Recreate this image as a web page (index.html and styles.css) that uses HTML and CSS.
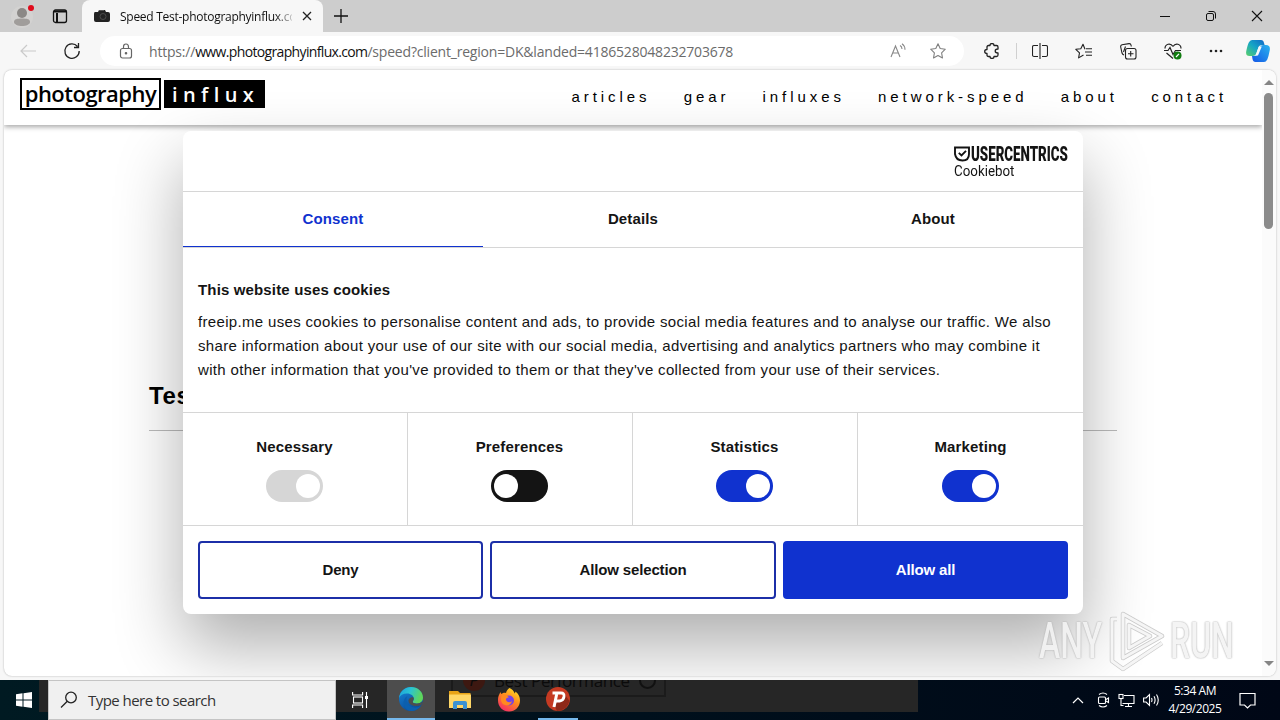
FILE: index.html
```html
<!DOCTYPE html>
<html lang="en">
<head>
    <meta charset="UTF-8">
    <meta name="viewport" content="width=device-width, initial-scale=1.0">
    <title>Speed Test-photographyinflux.com</title>
    <link rel="stylesheet" href="styles.css">
</head>
<body>
<div class="desktop">

    <!-- Tab strip -->
    <div class="tabstrip">
        <svg class="profile" width="24" height="32" viewBox="0 0 24 32">
            <circle cx="12" cy="17" r="11" fill="#d3d2d1"/>
            <circle cx="12" cy="13" r="5" fill="#8b8886"/>
            <path d="M4 22c0-3 3-3.500 8-3.500s8 .5 8 3.500c0 2.500-4 4-8 4s-8-1.500-8-4z" fill="#a09d9b"/>
            <circle cx="21" cy="8" r="3" fill="#e00b1c"/>
        </svg>
        <svg class="tab-actions" width="16" height="16" viewBox="0 0 16 16" fill="none" stroke="#111" stroke-width="1.300">
            <rect x="1.500" y="2" width="13" height="12.500" rx="2"/>
            <path d="M2 3.500h12M5 5v9" stroke-width="2"/>
        </svg>
        <div class="tab">
            <svg width="16" height="14" viewBox="0 0 16 14">
                <path d="M1 3h3l1-2h6l1 2h2q2 0 2 2v6q0 2-2 2H2q-2 0-2-2V5q0-2 1-2z" fill="#222"/>
                <circle cx="9" cy="7.500" r="3" fill="none" stroke="#4a4a4a"/>
                <path d="M5 1.500h5" stroke="#555"/>
            </svg>
            <span class="tab-title">Speed Test-photographyinflux.com</span>
            <svg width="10" height="10" viewBox="0 0 10 10" stroke="#222" stroke-width="1.300"><path d="M1 1l8 8M9 1L1 9"/></svg>
        </div>
        <svg class="new-tab" width="14" height="14" viewBox="0 0 14 14" stroke="#111" stroke-width="1.300"><path d="M7 0v14M0 7h14"/></svg>
        <div class="window-buttons">
            <svg width="12" height="12" viewBox="0 0 12 12" stroke="#111"><path d="M1 6.500h10"/></svg>
            <svg width="12" height="12" viewBox="0 0 12 12" fill="none" stroke="#111"><rect x="1.500" y="3.500" width="7" height="7" rx="1.500"/><path d="M3.500 1.500h4.500q2.500 0 2.500 2.500v4.500"/></svg>
            <svg width="12" height="12" viewBox="0 0 12 12" stroke="#111" stroke-width="1.100"><path d="M1 1l10 10M11 1L1 11"/></svg>
        </div>
    </div>

    <!-- Toolbar -->
    <div class="toolbar">
        <svg class="back" width="16" height="14" viewBox="0 0 16 14" fill="none" stroke="#cacaca" stroke-width="1.200"><path d="M16 7H1M7 1L1 7l6 6"/></svg>
        <svg class="reload" width="18" height="18" viewBox="0 0 18 18" fill="none" stroke="#222" stroke-width="1.300"><path d="M14.500 4.500A7.200 7.200 0 1 0 16.200 9M15.500 1v4.500H11"/></svg>
        <div class="address">
            <svg class="lock" width="14" height="16" viewBox="0 0 14 16" fill="none" stroke="#666" stroke-width="1.200"><rect x="1.500" y="5.500" width="11" height="9.500" rx="2"/><path d="M4.500 5.500V4q0-3 2.500-3t2.500 3v1.500"/><circle cx="7" cy="10.200" r=".7" fill="#555"/></svg>
            <span class="url">https://<b>www.photographyinflux.com</b>/speed?client_region=DK&amp;landed=4186528048232703678</span>
            <svg class="read" width="17" height="16" viewBox="0 0 17 16" fill="none" stroke="#888" stroke-width="1.100"><path d="M1 14L5.500 3 10 14M2.700 10h5.700M10 2.500q2 1 2 3.500M12 .8q3 2 3 6"/></svg>
            <svg class="fav" width="16" height="16" viewBox="0 0 16 16" fill="none" stroke="#808080" stroke-width="1.100" stroke-linejoin="round"><path d="M8 .8l2.200 4.700 5.100.7-3.700 3.600.9 5.200L8 12.500 3.500 15l.9-5.200L.7 6.200l5.100-.7z"/></svg>
        </div>
        <div class="tools">
            <svg width="16" height="16" viewBox="0 0 16 16" fill="none" stroke="#222" stroke-width="1.300" stroke-linejoin="round"><path d="M4.500 2.500H6q0-2 2-2t2 2h2.500q1.500 0 1.500 1.500v2q-2.800 0-2.800 2T14 10v2q0 1.500-1.500 1.500H10q0 2-2 2t-2-2H4.500Q3 13.500 3 12v-1.500Q.7 10.500.7 8.500T3 6.500V4q0-1.500 1.500-1.500z"/></svg>
            <i class="divider"></i>
            <svg width="16" height="16" viewBox="0 0 16 16" fill="none" stroke="#222" stroke-width="1.100"><path d="M6 2.500H2q-1.500 0-1.500 1.500v8q0 1.500 1.500 1.500h4M10 2.500h4q1.500 0 1.500 1.500v8q0 1.500-1.500 1.500h-4M8 0v16"/></svg>
            <svg width="18" height="16" viewBox="0 0 18 16" fill="none" stroke="#222" stroke-width="1.100" stroke-linejoin="round"><path d="M10 6.200L8 1.200 5.800 5.700.8 6.300l3.700 3.600-.9 5L8.500 12M11 5.700h6M10 9h7M11 12.300h6"/></svg>
            <svg width="17" height="17" viewBox="0 0 17 17" fill="none" stroke="#222" stroke-width="1.100"><rect x="5.500" y="5.500" width="10.500" height="10.500" rx="2"/><path d="M10.700 8v5.500M8 10.700h5.500M4 12q-1.500-.5-2-2L.7 4Q.4 2.200 2 1.800l7-1.200q1.700-.2 2 1.400l.3 1.500M5.500 3.500L3.500 9"/></svg>
            <svg width="18" height="17" viewBox="0 0 18 17" fill="none" stroke="#222" stroke-width="1.200"><path d="M9 3.500C6.500-.5 1 .8 1 5.500M9 3.500c2.500-4 8-2.700 8 2M0 7.500h4l2-3 3 7 2.500-4H17M2.500 10L9 15.500"/><circle cx="13.500" cy="12.500" r="4" fill="#107c10" stroke="none"/><path d="M12 14l3-3.200" stroke="#fff"/></svg>
            <svg width="14" height="4" viewBox="0 0 14 4" fill="#222"><circle cx="2" cy="2" r="1.300"/><circle cx="7" cy="2" r="1.300"/><circle cx="12" cy="2" r="1.300"/></svg>
        </div>
        <svg class="copilot" width="24" height="22" viewBox="0 0 24 22">
            <defs>
                <linearGradient id="cpa" x1="0" y1="1" x2="1" y2="0"><stop offset="0" stop-color="#5ad06a"/><stop offset=".5" stop-color="#16a6c5"/><stop offset="1" stop-color="#1166c8"/></linearGradient>
                <linearGradient id="cpb" x1="0" y1="1" x2="1" y2="0"><stop offset="0" stop-color="#1457e6"/><stop offset="1" stop-color="#2ab3ee"/></linearGradient>
            </defs>
            <path d="M6 0h9q2.500 0 3 3l.6 2h-3q-2.500 0-3.200 2.500L10.500 13q-.9 3-4 3H3.500Q-.5 16 .2 11.500 1.500 5 2.800 2.500 4 0 6 0z" fill="url(#cpa)"/>
            <path d="M18 22H9.500q-2.500 0-3-3L6 16h2.500q2.500 0 3.300-2.500L13.500 8q.9-3 4-3H20q4.500 0 3.800 5-1.200 6.500-2.500 9.500Q20 22 18 22z" fill="url(#cpb)"/>
            <path d="M12.800 6.500h3L12 15.500H9.500z" fill="#f4f8fb"/>
        </svg>
    </div>

    <!-- Web page -->
    <div class="viewport">
        <div class="page">
            <header class="site-header">
                <div class="logo"><span class="logo-photo">photography</span><span class="logo-influx">influx</span></div>
                <nav class="menu">
                    <a>articles</a><a>gear</a><a>influxes</a><a>network-speed</a><a>about</a><a>contact</a>
                </nav>
            </header>
            <h2 class="page-title">Test your network speed</h2>

            <!-- Cookie dialog -->
            <div class="dialog">
                <div class="dialog-head">
                    <div class="brand">
                        <div class="brand-top">
                            <svg width="16" height="16" viewBox="0 0 16 16" fill="none" stroke="#141414" stroke-width="1.900"><path d="M1 1.500h14V8q0 6.500-6.500 6.500T1 8zM4.800 6.800L7.500 9.500 12 4.800"/></svg>
                            <span>USERCENTRICS</span>
                        </div>
                        <span class="brand-sub">Cookiebot</span>
                    </div>
                </div>
                <div class="dialog-tabs">
                    <div class="active">Consent</div>
                    <div>Details</div>
                    <div>About</div>
                </div>
                <div class="dialog-body">
                    <h3>This website uses cookies</h3>
                    <p>freeip.me uses cookies to personalise content and ads, to provide social media features and to analyse our traffic. We also<br>
                    share information about your use of our site with our social media, advertising and analytics partners who may combine it<br>
                    with other information that you've provided to them or that they've collected from your use of their services.</p>
                </div>
                <div class="options">
                    <div><span>Necessary</span><i class="switch disabled"></i></div>
                    <div><span>Preferences</span><i class="switch off"></i></div>
                    <div><span>Statistics</span><i class="switch"></i></div>
                    <div><span>Marketing</span><i class="switch"></i></div>
                </div>
                <div class="buttons">
                    <button>Deny</button>
                    <button>Allow selection</button>
                    <button class="primary">Allow all</button>
                </div>
            </div>
        </div>
        <div class="scrollbar">
            <i class="arrow up"></i>
            <i class="thumb"></i>
            <i class="arrow down"></i>
        </div>
    </div>

    <!-- Watermark -->
    <div class="watermark">
        <span>ANY</span>
        <svg width="58" height="62" viewBox="0 0 58 62" fill="none" stroke-linejoin="round">
            <path d="M15 4v44l39-22zM21 15v23l21-12zM9 9H4v42l11 8 39-26" stroke="#c4c4c4" stroke-width="4.500"/>
            <path d="M15 4v44l39-22zM21 15v23l21-12zM9 9H4v42l11 8 39-26" stroke="#f5f5f5" stroke-width="3"/>
        </svg>
        <span>RUN</span>
    </div>

    <!-- Taskbar -->
    <div class="taskbar">
        <div class="backdrop"><div class="ghost"><i>P</i>Best Performance<b></b></div></div>
        <svg class="start" width="16" height="16" viewBox="0 0 16 16" fill="#fff"><path d="M0 2.200l6.500-.9v6.200H0zM7.500 1.200L16 0v7.500H7.500zM0 8.500h6.500v6.200L0 13.800zM7.500 8.500H16V16l-8.500-1.200z"/></svg>
        <div class="search">
            <svg width="18" height="18" viewBox="0 0 18 18" fill="none" stroke="#222" stroke-width="1.300"><circle cx="11" cy="6.500" r="5.300"/><path d="M7.300 10.300L1 16.500"/></svg>
            <span>Type here to search</span>
        </div>
        <div class="task">
            <svg width="17" height="16" viewBox="0 0 17 16" fill="none" stroke="#fff" stroke-width="1.100"><path d="M.6 0v3h10V0M.6 16v-3h10v3M14.500 0v16"/><rect x="1.500" y="5" width="9" height="6"/><path d="M13 5.500h3" stroke-width="3"/></svg>
        </div>
        <div class="task open">
            <svg width="24" height="24" viewBox="0 0 24 24">
                <defs>
                    <linearGradient id="ea" x1="0" y1="0" x2="1" y2=".3"><stop offset="0" stop-color="#1aa0df"/><stop offset=".5" stop-color="#2bc4d2"/><stop offset="1" stop-color="#5fd65a"/></linearGradient>
                    <linearGradient id="eb" x1="0" y1="0" x2=".5" y2="1"><stop offset="0" stop-color="#1687d9"/><stop offset="1" stop-color="#0b4d9c"/></linearGradient>
                </defs>
                <circle cx="12" cy="12" r="12" fill="url(#eb)"/>
                <path d="M0 11C1 4 6 0 12 0c7 0 12 5 12 10.500 0 4-3 6-6.500 6-3 0-4-1-3.700-2 .5-1 1-1.500 1-3C14.800 9 12 6.500 8 6.500 4 6.500 1 8.500 0 11z" fill="url(#ea)"/>
                <path d="M8.500 9C6 12 8 20 16 20.500q3.500.2 6-2c-2 3.500-6 5.500-10 5.500-5 0-9-6-7-11q1-3 3.500-4z" fill="#0c5fae"/>
                <path d="M14.800 11.500c0 2-1.500 2.500-1 3.700.6 1.500 5.200 2.300 8.700 0L24 15l-2 3c-5 2.500-12 .5-12.500-4-.2-3 5-5 5.300-2.500z" fill="#4d4d4d"/>
            </svg>
        </div>
        <div class="task">
            <svg width="22" height="20" viewBox="0 0 22 20"><path d="M0 1h9l2 2h10.500v15H0z" fill="#e8a317"/><path d="M0 4.500h22V18H0z" fill="#ffd767"/><path d="M4 19v-6q0-2 2-2h10q2 0 2 2v6h-4v-4H8v4z" fill="#3b92d2"/></svg>
        </div>
        <div class="task">
            <svg width="24" height="24" viewBox="0 0 24 24">
                <defs><linearGradient id="ff" x1=".8" y1="0" x2=".2" y2="1"><stop offset="0" stop-color="#ffe226"/><stop offset=".45" stop-color="#ff8a1d"/><stop offset="1" stop-color="#f5256d"/></linearGradient></defs>
                <path d="M12.500 0c4 2 5 4.500 5 5.500.8-.3 1-1.200.8-2C22 6 23 9.500 23 12.500 23 19 18 23.500 12 23.500S1 19 1 12.500C1 8 2.500 6 3.500 4c.2 1 .5 1.700 1 2C6 4.500 8 4.500 9 5c.5-2 1.500-4 3.500-5z" fill="url(#ff)"/>
                <circle cx="12" cy="12.500" r="5" fill="#7542e5"/>
                <path d="M5 7q5-1 7 2.500c-3 0-3 1.500-3 2.500 1 2.500 4 3 6 1-1 4-4 5-7 4-4-1-5-6-3-10z" fill="#ff8a20"/>
            </svg>
        </div>
        <div class="task running">
            <svg width="24" height="24" viewBox="0 0 24 24"><circle cx="12" cy="12" r="12" fill="#c53a22"/><path d="M9 20l2 3.900Q21 24 23.500 14L18.500 7l-4 7.500H11z" fill="#8e2818"/><path d="M6.500 6H15q3.500 0 3 3.700T13.500 14H10" fill="none" stroke="#fff" stroke-width="2.800"/><path d="M10.700 7L8 20" fill="none" stroke="#fff" stroke-width="3"/></svg>
        </div>
        <div class="tray">
            <svg width="12" height="8" viewBox="0 0 12 8" fill="none" stroke="#fff" stroke-width="1.200"><path d="M1 7l5-5 5 5"/></svg>
            <svg width="13" height="16" viewBox="0 0 13 16" fill="none" stroke="#fff" stroke-width="1.100"><rect x="1.500" y="5" width="7" height="6.500" rx="1"/><path d="M9 7.500l2.500-1.500v4.500L9 9M2 2.500Q6 -.5 10 2.500M2 13.500q4 3 8 0"/></svg>
            <svg width="17" height="15" viewBox="0 0 17 15" fill="none" stroke="#fff" stroke-width="1.100"><path d="M6 2.500h10v8H4.500M10.500 10.500V13.500M7 13.500h7M3 5.500v7h2.500"/><rect x="1" y="1.500" width="4" height="4"/></svg>
            <svg width="17" height="14" viewBox="0 0 17 14" fill="none" stroke="#fff" stroke-width="1.100"><path d="M.6 5h2.500L6.500 1.500v11L3.100 9H.6zM8.500 5q1 2 0 4M11 3.300q2.200 3.700 0 7.400M13.500 1.500q3.500 5.500 0 11"/></svg>
            <div class="clock"><span>5:34 AM</span><span>4/29/2025</span></div>
            <svg width="17" height="17" viewBox="0 0 17 17" fill="none" stroke="#fff" stroke-width="1.200"><path d="M1 1.500h15v11.500h-4.500L8.500 16l-3-3H1z"/></svg>
        </div>
    </div>
</div>
</body>
</html>
```
FILE: styles.css
```css
* {
    box-sizing: border-box;
}
body {
    margin: 0;
    font-family: "Liberation Sans", Arial, sans-serif;
}
svg {
    display: block;
    flex: none;
}
.desktop {
    position: relative;
    width: 1280px;
    height: 720px;
    overflow: hidden;
    background: #f7f7f7;
    display: flex;
    flex-direction: column;
}

/* tab strip */
.tabstrip {
    height: 32px;
    flex: none;
    display: flex;
    align-items: center;
    background: #cdcdcd;
}
.profile {
    margin-left: 10px;
}
.tab-actions {
    margin-left: 18px;
}
.tab {
    width: 241px;
    height: 32px;
    margin-left: 14px;
    padding: 0 11px 0 12px;
    display: flex;
    align-items: center;
    background: #f7f7f7;
    border-radius: 8px 8px 0 0;
}
.tab-title {
    width: 174px;
    margin: 0 10px 0 10px;
    overflow: hidden;
    white-space: nowrap;
    font-family: "Open Sans", sans-serif;
    font-size: 12px;
    letter-spacing: -0.27px;
    color: #111;
    -webkit-mask-image: linear-gradient(90deg, #000 155px, transparent 176px);
    mask-image: linear-gradient(90deg, #000 155px, transparent 176px);
}
.new-tab {
    margin-left: 11px;
}
.window-buttons {
    margin-left: auto;
    margin-right: 17px;
    display: flex;
    gap: 34px;
}

/* toolbar */
.toolbar {
    height: 38px;
    flex: none;
    display: flex;
    align-items: center;
}
.back {
    margin-left: 20px;
}
.reload {
    margin-left: 27px;
}
.address {
    width: 864px;
    height: 30px;
    margin-left: 19px;
    padding: 0 18px 0 19px;
    display: flex;
    align-items: center;
    background: #fff;
    border-radius: 15px;
}
.url {
    margin-left: 16px;
    font-family: "Open Sans", sans-serif;
    font-size: 14px;
    letter-spacing: -0.2px;
    white-space: nowrap;
    color: #6b6b6b;
}
.url b {
    font-weight: normal;
    letter-spacing: -0.65px;
    color: #111;
}
.read {
    margin-left: auto;
}
.fav {
    margin-left: 23px;
}
.tools {
    margin-left: 20px;
    display: flex;
    align-items: center;
    gap: 27px;
}
.divider {
    width: 1px;
    height: 16px;
    margin: 0 -12px 0 -11px;
    background: #d0d0d0;
}
.copilot {
    margin-left: 23px;
}

/* page */
.viewport {
    width: 1272px;
    height: 606px;
    margin-left: 4px;
    flex: none;
    display: flex;
    overflow: hidden;
    background: #fff;
    border-radius: 8px;
    box-shadow: 0 0 2px rgba(0, 0, 0, 0.3);
}
.page {
    position: relative;
    width: 1258px;
    overflow: hidden;
}
.site-header {
    height: 55px;
    padding: 0 32px 0 16px;
    display: flex;
    align-items: center;
    justify-content: space-between;
    background: #fff;
    box-shadow: 0 2px 5px rgba(0, 0, 0, 0.35);
}
.logo {
    display: flex;
    align-items: center;
    margin-top: -7px;
    font-family: "Open Sans", sans-serif;
}
.logo-photo {
    width: 141px;
    height: 32px;
    border: 2px solid #000;
    font-size: 22px;
    font-weight: 600;
    line-height: 26px;
    text-align: center;
    letter-spacing: -0.5px;
}
.logo-influx {
    width: 101px;
    height: 28px;
    margin-left: 3px;
    padding-left: 8px;
    background: #000;
    color: #fff;
    font-size: 20px;
    font-weight: 600;
    line-height: 29px;
    letter-spacing: 5.4px;
}
.menu {
    display: flex;
    gap: 33.2px;
    margin: -2px 3px 0 0;
    font-size: 15px;
    letter-spacing: 3.93px;
    color: #000;
}
.page-title {
    width: 968px;
    height: 49px;
    margin: 257px 0 0 145px;
    font-size: 24px;
    line-height: 28px;
    letter-spacing: 0.6px;
    border-bottom: 1px solid #bbb;
}

/* cookie dialog */
.dialog {
    position: absolute;
    left: 179px;
    top: 61px;
    width: 900px;
    height: 483px;
    background: #fff;
    border-radius: 8px;
    box-shadow: 0 32px 68px rgba(0, 0, 0, 0.32);
    color: #141414;
    font-size: 15px;
    letter-spacing: 0.15px;
}
.dialog-head {
    height: 61px;
    padding: 14px 15px 0;
    display: flex;
    justify-content: flex-end;
    border-bottom: 1px solid #d6d6d6;
}
.brand {
    width: 114px;
    letter-spacing: 0;
}
.brand-top {
    display: flex;
    align-items: center;
    gap: 1px;
    height: 18px;
}
.brand-top span {
    font-family: Roboto, sans-serif;
    font-size: 20.5px;
    line-height: 16px;
    font-weight: 900;
    transform: scaleX(0.65);
    transform-origin: left;
}
.brand-sub {
    display: block;
    font-family: Roboto, sans-serif;
    font-size: 15px;
    line-height: 16px;
    transform: scaleX(0.89);
    transform-origin: left;
}
.dialog-tabs {
    height: 56px;
    display: flex;
    border-bottom: 1px solid #d6d6d6;
    font-weight: bold;
    text-align: center;
    line-height: 54px;
}
.dialog-tabs div {
    flex: 1;
}
.dialog-tabs .active {
    color: #1032cf;
    border-bottom: 1px solid #1032cf;
}
.dialog-body {
    height: 164px;
    padding: 33px 15px 0;
}
.dialog-body h3 {
    margin: 0 0 11px;
    font-size: 15px;
    line-height: 18px;
}
.dialog-body p {
    margin: 0;
    line-height: 24px;
    letter-spacing: 0.33px;
    white-space: nowrap;
}
.options {
    height: 114px;
    display: flex;
    border-top: 1px solid #d6d6d6;
    border-bottom: 1px solid #d6d6d6;
    font-weight: bold;
}
.options div {
    width: 225px;
    padding: 25px 1px 0 0;
    display: flex;
    flex-direction: column;
    align-items: center;
    line-height: 17px;
    border-right: 1px solid #d6d6d6;
}
.options div:last-child {
    padding-right: 0;
    border-right: 0;
}
.switch {
    width: 57px;
    height: 32px;
    margin-top: 15px;
    padding: 4px 3px;
    display: flex;
    justify-content: flex-end;
    background: #1032cf;
    border-radius: 16px;
}
.switch::after {
    content: "";
    width: 24px;
    height: 24px;
    background: #fff;
    border-radius: 50%;
}
.switch.off {
    background: #141414;
    justify-content: flex-start;
}
.switch.disabled {
    background: #d6d6d6;
}
.buttons {
    padding: 15px;
    display: flex;
    gap: 7.4px;
}
.buttons button {
    flex: 1;
    height: 58px;
    padding: 0 0 2px;
    background: #fff;
    border: 2px solid #1c2fa8;
    border-radius: 4px;
    color: #141414;
    font: bold 15px "Liberation Sans", Arial, sans-serif;
    letter-spacing: -0.15px;
}
.buttons .primary {
    background: #1032cf;
    border-color: #1032cf;
    color: #fff;
}

/* scrollbar */
.scrollbar {
    width: 14px;
    padding: 10px 1px 10px 0;
    display: flex;
    flex-direction: column;
    align-items: center;
    background: #fbfbfb;
}
.thumb {
    width: 9px;
    height: 136px;
    margin-top: 8px;
    background: #8b8b8b;
    border-radius: 5px;
}
.arrow {
    border: 5px solid transparent;
}
.arrow.up {
    border-top: 0;
    border-bottom-color: #858585;
}
.arrow.down {
    margin-top: auto;
    border-bottom: 0;
    border-top-color: #858585;
}

/* watermark lies over the page */
.watermark {
    position: absolute;
    left: 1039px;
    top: 609px;
    width: 196px;
    height: 64px;
    display: flex;
    align-items: center;
    opacity: 0.9;
}
.watermark span {
    width: 64px;
    font-family: Roboto, sans-serif;
    font-size: 50px;
    font-weight: 500;
    color: #f3f3f3;
    text-shadow: 0 0 2px #aaa, 0 0 2px #bbb;
    transform: scaleX(0.64);
    transform-origin: left;
}
.watermark svg {
    margin: 0 4px 0 5px;
}

/* taskbar */
.taskbar {
    position: relative;
    height: 40px;
    margin-top: 4px;
    flex: none;
    display: flex;
    align-items: center;
    background: linear-gradient(90deg, #001a22, #00101c 50%, #000716);
}
.backdrop {
    position: absolute;
    left: 39px;
    top: 0;
    width: 879px;
    height: 32px;
    overflow: hidden;
    background: #262626;
}
.ghost {
    width: 215px;
    height: 30px;
    margin: -13px 0 0 412px;
    padding: 0 0 4px 10px;
    display: flex;
    align-items: center;
    gap: 9px;
    border: 2px solid #1b1b1b;
    white-space: nowrap;
    font: 17px "Open Sans", sans-serif;
    letter-spacing: -0.4px;
    color: #0b0b0b;
}
.ghost i {
    width: 22px;
    height: 22px;
    border-radius: 50%;
    background: #3d1811;
    text-align: center;
    line-height: 22px;
}
.ghost b {
    width: 17px;
    height: 17px;
    flex: none;
    border: 2px solid #111;
    border-radius: 50%;
}
.start {
    position: relative;
    margin-left: 16px;
}
.search {
    position: relative;
    width: 288px;
    height: 40px;
    margin-left: 16px;
    padding-left: 11px;
    display: flex;
    align-items: center;
    gap: 10px;
    background: #f0f0f0;
    border: 1px solid #c4c4c4;
    font-family: "Open Sans", sans-serif;
    font-size: 15px;
    letter-spacing: -0.55px;
    color: #333;
}
.task {
    position: relative;
    width: 48px;
    height: 40px;
    margin-right: 1px;
    display: flex;
    align-items: center;
    justify-content: center;
}
.search + .task {
    margin-right: 3px;
}
.task.open {
    background: #4d4d4d;
    border-bottom: 2px solid #76b9ed;
}
.task.running {
    width: 40px;
    margin-left: 4px;
    border-bottom: 2px solid #76b9ed;
}
.tray {
    margin-left: auto;
    margin-right: 24px;
    display: flex;
    align-items: center;
    gap: 8px;
}
.tray > svg:first-child {
    margin-right: 5px;
}
.clock {
    width: 56px;
    margin-left: -1px;
    display: flex;
    flex-direction: column;
    align-items: center;
    font: 12px/18px "Open Sans", sans-serif;
    letter-spacing: -0.45px;
    color: #fff;
    white-space: nowrap;
}
.clock + svg {
    margin-left: 8px;
}
```
